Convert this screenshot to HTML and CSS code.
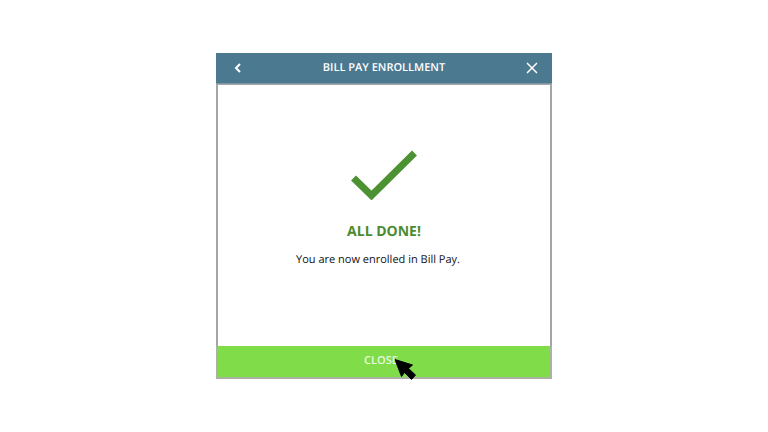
FILE: index.html
```
<!DOCTYPE html>
<html lang="en">
<head>
    <meta charset="UTF-8">
    <meta name="viewport" content="width=device-width, initial-scale=1">
    <title>Bill Pay Enrollment</title>
    <link rel="stylesheet" href="styles.css">
</head>
<body>
    <main class="dialog">
        <header class="dialog-header">
            <button type="button" class="icon-button" aria-label="Back">
                <svg width="12" height="12" viewBox="0 0 12 12"><path d="M8 2 4 6l4 4"/></svg>
            </button>
            <h1>BILL PAY ENROLLMENT</h1>
            <button type="button" class="icon-button dismiss" aria-label="Dismiss">
                <svg width="12" height="12" viewBox="0 0 12 12"><path d="m1 1 10 10M11 1 1 11"/></svg>
            </button>
        </header>

        <section class="dialog-body">
            <svg class="check" width="66" height="50" viewBox="0 0 66 50"><path d="M2.500 28 20.500 45.500 63.500 3"/></svg>
            <h2>ALL DONE!</h2>
            <p>You are now enrolled in Bill Pay.</p>
        </section>

        <footer class="dialog-footer">
            <button type="button" class="close-button">CLOSE</button>
            <!-- mouse pointer over the button -->
            <svg class="pointer" width="24" height="24" viewBox="0 0 24 24"><path d="M1 1.500 18.500 7 14.500 10.500 21.500 17 17.500 21.500 10.500 14.500 7.500 18.500Z"/></svg>
        </footer>
    </main>
</body>
</html>
```
FILE: styles.css
```
* {
    box-sizing: border-box;
}

body {
    display: flex;
    align-items: center;
    justify-content: center;
    min-height: 100vh;
    margin: 0;
    background: #fff;
    color: #111;
    font-family: 'Open Sans', sans-serif;
    text-rendering: geometricPrecision;
}

h1, h2, p {
    margin: 0;
}

button {
    border: 0;
    padding: 0;
    font-family: inherit;
    text-rendering: inherit;
    cursor: pointer;
}

svg {
    display: block;
    fill: none;
}

.dialog {
    display: flex;
    flex-direction: column;
    width: 100%;
    max-width: 336px;
    background: #fff;
}

.dialog-header {
    display: flex;
    align-items: center;
    justify-content: space-between;
    padding: 0 12px;
    height: 31px;
    background: #4b7990;
    border-bottom: 1px solid #7e97a4;
    color: #fff;
}

.dialog-header h1 {
    font-size: 11px;
    font-weight: 600;
    line-height: 18px;
}

.icon-button {
    display: flex;
    align-items: center;
    justify-content: center;
    width: 20px;
    height: 16px;
    background: none;
    color: #fff;
}

.icon-button svg {
    flex: none;
    stroke: currentColor;
    stroke-width: 2;
}

.dismiss {
    justify-content: flex-end;
    padding-right: 2px;
}

.dismiss svg {
    stroke-width: 1.5;
}

.dialog-body {
    display: flex;
    flex-direction: column;
    align-items: center;
    padding: 65px 0 76px;
    border: 1px solid #a3a6a5;
    border-width: 1px 2px 0;
    text-align: center;
}

.check {
    stroke: #4c9132;
    stroke-width: 7;
}

.dialog-body h2 {
    margin-top: 20px;
    color: #4c8b32;
    font-size: 14px;
    font-weight: 700;
    line-height: 24px;
}

.dialog-body p {
    margin-top: 6px;
    padding-right: 12px;
    font-size: 11px;
    line-height: 20px;
}

.dialog-footer {
    position: relative;
    border: 2px solid #a9b3a4;
    border-top: 0;
}

.close-button {
    display: block;
    width: 100%;
    height: 31px;
    padding: 0 6px 2px 0;
    background: #80dc49;
    color: #e8f9df;
    font-size: 11px;
    font-weight: 600;
}

.pointer {
    position: absolute;
    top: 12px;
    left: calc(50% + 10px);
    fill: #000;
    stroke: #000;
    stroke-linejoin: round;
    pointer-events: none;
}
```
